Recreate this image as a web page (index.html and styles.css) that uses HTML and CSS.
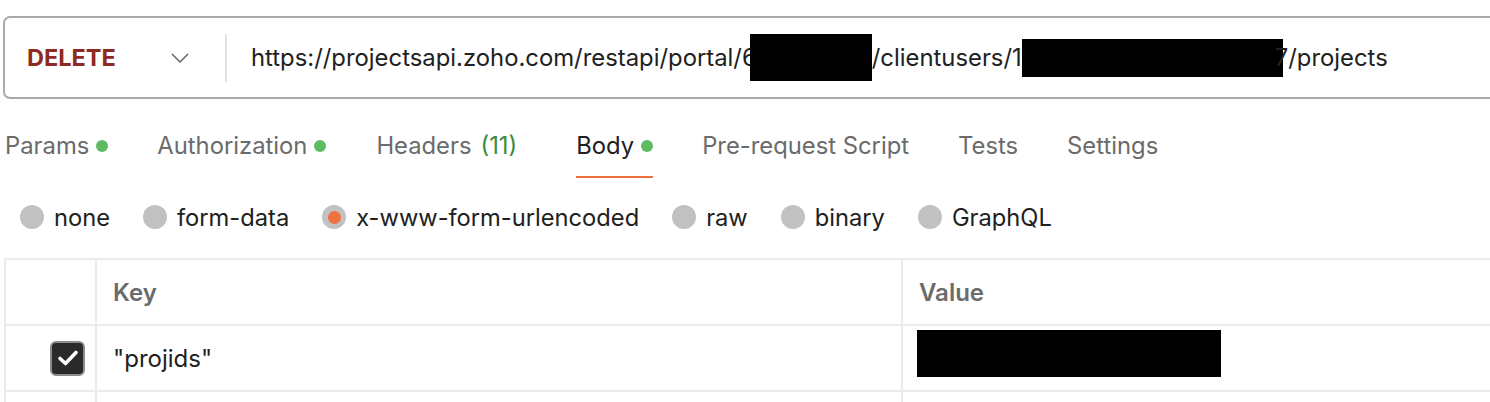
FILE: index.html
```html
<!DOCTYPE html>
<html lang="en">
<head>
<meta charset="utf-8">
<title>Request</title>
<link rel="stylesheet" href="styles.css">
</head>
<body>
<div class="url-bar">
  <div class="method">
    <span class="method-name">DELETE</span>
    <svg class="chevron" width="18" height="10" viewBox="0 0 18 10"><path d="M1 1 L9 9 L17 1" fill="none" stroke="#6b6b6b" stroke-width="1.6"/></svg>
  </div>
  <div class="sep"></div>
  <div class="url">https://projectsapi.zoho.com/restapi/portal/<span class="peek">6</span><span class="redact r1"></span>/clientusers/1<span class="redact r2"></span>7/projects</div>
</div>

<nav class="tabs">
  <div class="tab">Params<span class="dot"></span></div>
  <div class="tab">Authorization<span class="dot"></span></div>
  <div class="tab tab-headers">Headers<span class="count">(11)</span></div>
  <div class="tab active">Body<span class="dot"></span></div>
  <div class="tab">Pre-request Script</div>
  <div class="tab">Tests</div>
  <div class="tab">Settings</div>
</nav>

<div class="radios">
  <label class="radio"><span class="circle"></span>none</label>
  <label class="radio"><span class="circle"></span>form-data</label>
  <label class="radio"><span class="circle on"></span>x-www-form-urlencoded</label>
  <label class="radio"><span class="circle"></span>raw</label>
  <label class="radio"><span class="circle"></span>binary</label>
  <label class="radio"><span class="circle"></span>GraphQL</label>
</div>

<div class="kv">
  <div class="cell c1"></div>
  <div class="cell head">Key</div>
  <div class="cell head">Value</div>

  <div class="cell c1"><span class="checkbox"><svg width="22" height="18" viewBox="0 0 22 18"><path d="M3 9.5 L8.5 14.5 L19 3.5" fill="none" stroke="#fff" stroke-width="3.6" stroke-linecap="round" stroke-linejoin="round"/></svg></span></div>
  <div class="cell">"projids"</div>
  <div class="cell value-cell"><span class="redact r3"></span></div>

  <div class="cell c1"></div>
  <div class="cell"></div>
  <div class="cell"></div>
</div>
</body>
</html>
```

FILE: styles.css
```css
html, body {
  margin: 0;
  padding: 0;
  background: #ffffff;
  overflow: hidden;
}

body {
  font-family: Inter, "Noto Sans", "Liberation Sans", sans-serif;
  color: #212121;
  font-size: 24px;
}

.url-bar {
  box-sizing: border-box;
  margin: 16px 0 0 3px;
  width: 1520px;
  height: 83px;
  border: 2px solid #a9a9a9;
  border-radius: 7px;
  display: flex;
  align-items: center;
}

.method {
  display: flex;
  align-items: center;
  width: 220px;
  padding-left: 22px;
  box-sizing: border-box;
}

.method-name {
  color: #8e2a1f;
  font-weight: 700;
  font-size: 23.5px;
  width: 144px;
}

.chevron {
  display: block;
}

.sep {
  width: 2px;
  height: 48px;
  background: #e2e2e2;
}

.url {
  margin-left: 24px;
  white-space: nowrap;
  font-size: 23.85px;
  color: #212121;
  display: flex;
  align-items: center;
}

.redact {
  display: inline-block;
  background: #000;
}

.r1 {
  width: 122px;
  height: 47px;
  margin-left: -7px;
}

.r2 {
  width: 261px;
  height: 38px;
  margin-right: -8px;
}

.r3 {
  width: 304px;
  height: 47px;
  margin-left: -2px;
}

.tabs {
  display: flex;
  gap: 49px;
  margin: 22px 0 0 5px;
}

.tab {
  display: flex;
  align-items: center;
  line-height: 30px;
  padding: 10px 0 15px;
  border-bottom: 2px solid transparent;
  color: #6b6b6b;
  font-size: 23.8px;
}

.tab.active {
  color: #212121;
  border-bottom-color: #f0703f;
}

.tab-headers {
  margin-left: 1px;
  margin-right: 10px;
}

.count {
  color: #3b8a3e;
  margin-left: 9px;
}

.dot {
  width: 12px;
  height: 12px;
  border-radius: 50%;
  background: #5cbb63;
  margin-left: 7px;
}

.radios {
  display: flex;
  gap: 33px;
  margin: 27px 0 0 20px;
  height: 24px;
  align-items: center;
}

.radio {
  display: flex;
  align-items: center;
  gap: 10px;
  font-size: 23.7px;
  color: #212121;
}

.circle {
  width: 24px;
  height: 24px;
  border-radius: 50%;
  background: #c1c1c1;
  display: flex;
  align-items: center;
  justify-content: center;
}

.circle.on::after {
  content: "";
  width: 13px;
  height: 13px;
  border-radius: 50%;
  background: #f0703f;
}

.kv {
  margin: 29px 0 0 4px;
  width: 1520px;
  display: grid;
  grid-template-columns: 91px 806px 1fr;
  grid-auto-rows: 66px;
  border-top: 2px solid #ebebeb;
  border-left: 2px solid #ebebeb;
}

.cell {
  box-sizing: border-box;
  border-right: 2px solid #ebebeb;
  border-bottom: 2px solid #ebebeb;
  display: flex;
  align-items: center;
  padding-left: 16px;
  font-size: 24px;
  color: #212121;
}

.cell.value-cell {
  align-items: flex-start;
  padding-top: 4px;
}

.cell.c1 {
  padding: 0 10px 0 0;
  justify-content: flex-end;
}

.cell.head {
  color: #6b6b6b;
  font-weight: 600;
}

.checkbox {
  box-sizing: border-box;
  width: 35px;
  height: 35px;
  border-radius: 6px;
  background: #2a2a2a;
  border: 2px solid #8c8c8c;
  display: flex;
  align-items: center;
  justify-content: center;
}
```
